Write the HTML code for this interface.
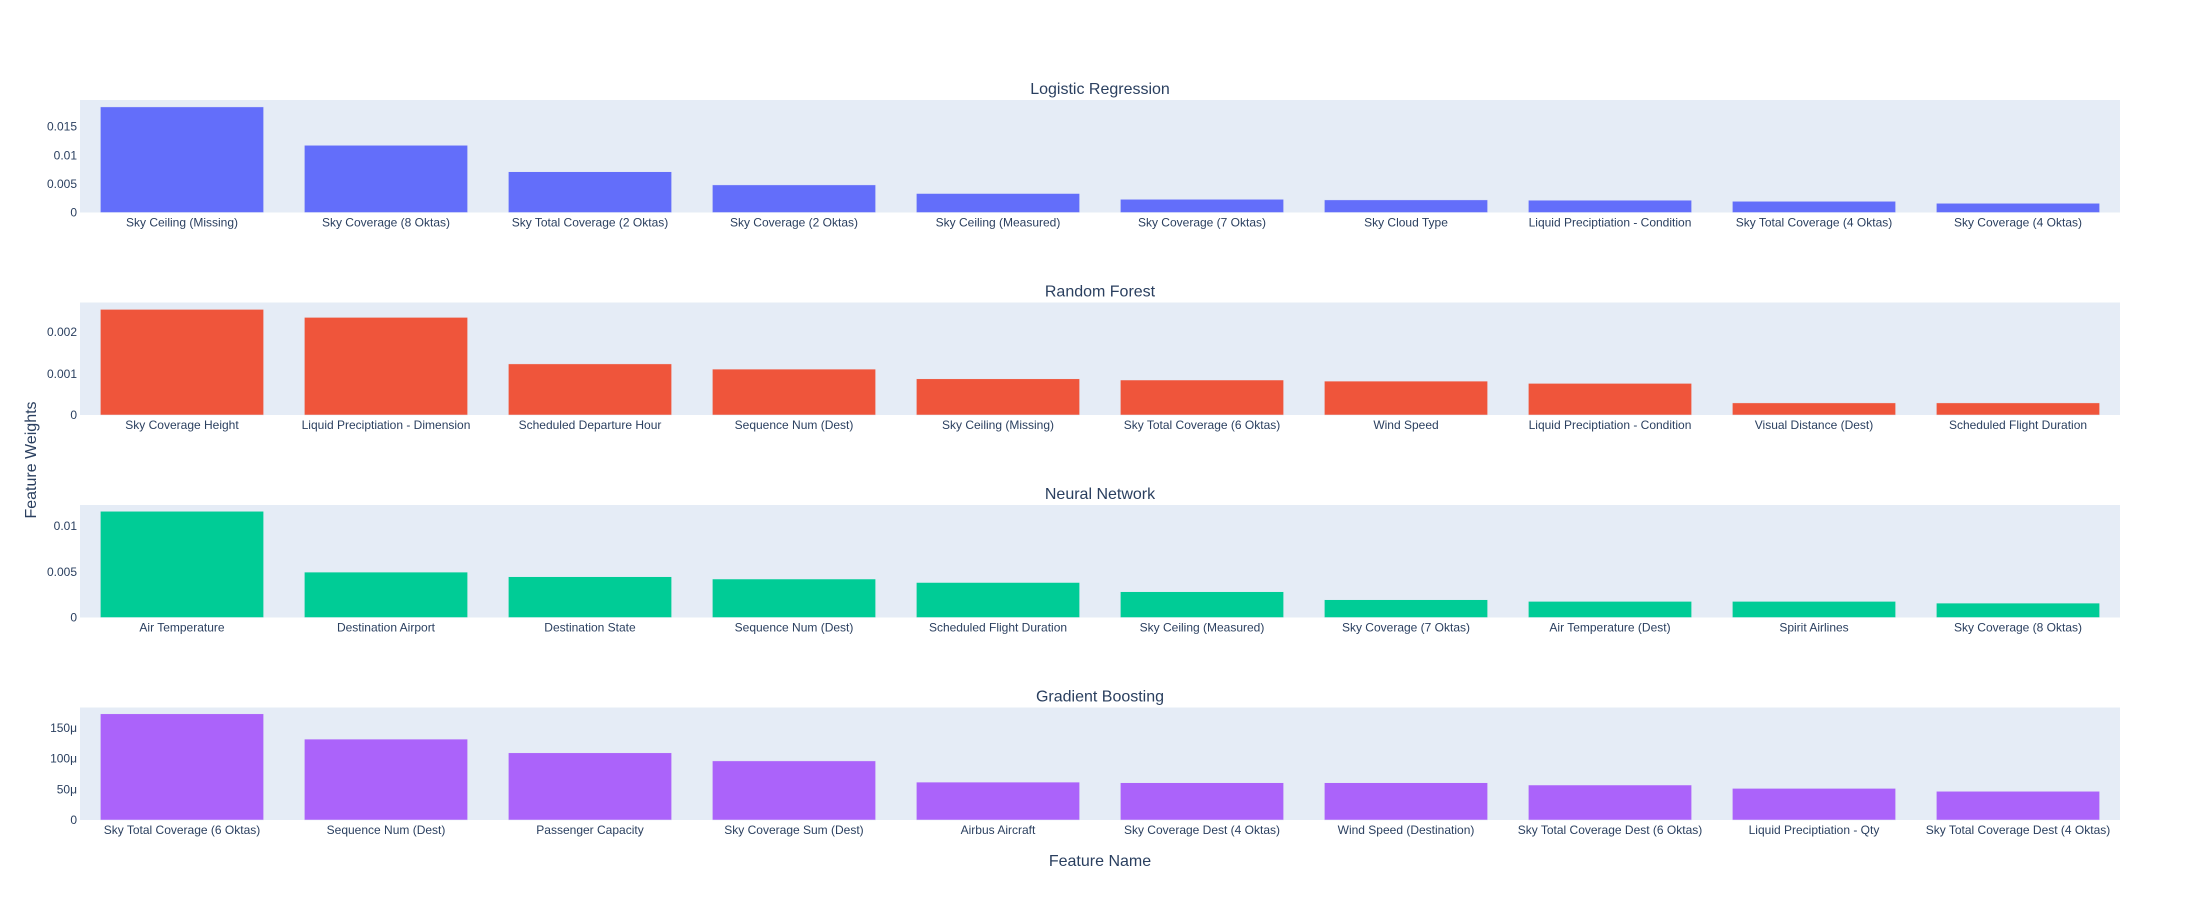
<!DOCTYPE html>
<html><head><meta charset="utf-8"><style>html,body{margin:0;padding:0;background:#fff}svg{display:block}text{font-family:"Liberation Sans",Arial,sans-serif;fill:#2a3f5f}</style></head><body>
<svg width="2200" height="900" viewBox="0 0 2200 900" xmlns="http://www.w3.org/2000/svg">
<g id="lr">
<rect x="80" y="100" width="2040" height="112.5" fill="#E5ECF6"/>
<text x="1100" y="94" font-size="16" text-anchor="middle">Logistic Regression</text>
<g font-size="12" text-anchor="end"><text x="77" y="216.5">0</text><text x="77" y="188">0.005</text><text x="77" y="159.3">0.01</text><text x="77" y="130.6">0.015</text></g>
<g fill="#636efa" stroke="#e5ecf6" stroke-width="0.5">
<rect x="100.4" y="106.9" width="163.2" height="105.6"/><rect x="304.4" y="145.3" width="163.2" height="67.2"/><rect x="508.4" y="171.7" width="163.2" height="40.8"/><rect x="712.4" y="184.9" width="163.2" height="27.6"/><rect x="916.4" y="193.5" width="163.2" height="19"/><rect x="1120.4" y="199.3" width="163.2" height="13.2"/><rect x="1324.4" y="199.9" width="163.2" height="12.6"/><rect x="1528.4" y="200.2" width="163.2" height="12.3"/><rect x="1732.4" y="201.3" width="163.2" height="11.2"/><rect x="1936.4" y="203.3" width="163.2" height="9.2"/></g>
<g font-size="12" text-anchor="middle"><text x="182" y="226.5">Sky Ceiling (Missing)</text><text x="386" y="226.5">Sky Coverage (8 Oktas)</text><text x="590" y="226.5">Sky Total Coverage (2 Oktas)</text><text x="794" y="226.5">Sky Coverage (2 Oktas)</text><text x="998" y="226.5">Sky Ceiling (Measured)</text><text x="1202" y="226.5">Sky Coverage (7 Oktas)</text><text x="1406" y="226.5">Sky Cloud Type</text><text x="1610" y="226.5">Liquid Preciptiation - Condition</text><text x="1814" y="226.5">Sky Total Coverage (4 Oktas)</text><text x="2018" y="226.5">Sky Coverage (4 Oktas)</text></g>
</g>
<g id="rf">
<rect x="80" y="302.5" width="2040" height="112.5" fill="#E5ECF6"/>
<text x="1100" y="296.5" font-size="16" text-anchor="middle">Random Forest</text>
<g font-size="12" text-anchor="end"><text x="77" y="419">0</text><text x="77" y="378">0.001</text><text x="77" y="336">0.002</text></g>
<g fill="#EF553B" stroke="#e5ecf6" stroke-width="0.5">
<rect x="100.4" y="309.4" width="163.2" height="105.6"/><rect x="304.4" y="317.4" width="163.2" height="97.6"/><rect x="508.4" y="363.9" width="163.2" height="51.1"/><rect x="712.4" y="369.1" width="163.2" height="45.9"/><rect x="916.4" y="378.8" width="163.2" height="36.2"/><rect x="1120.4" y="380" width="163.2" height="35"/><rect x="1324.4" y="381.1" width="163.2" height="33.9"/><rect x="1528.4" y="383.4" width="163.2" height="31.6"/><rect x="1732.4" y="402.9" width="163.2" height="12.1"/><rect x="1936.4" y="402.9" width="163.2" height="12.1"/></g>
<g font-size="12" text-anchor="middle"><text x="182" y="429">Sky Coverage Height</text><text x="386" y="429">Liquid Preciptiation - Dimension</text><text x="590" y="429">Scheduled Departure Hour</text><text x="794" y="429">Sequence Num (Dest)</text><text x="998" y="429">Sky Ceiling (Missing)</text><text x="1202" y="429">Sky Total Coverage (6 Oktas)</text><text x="1406" y="429">Wind Speed</text><text x="1610" y="429">Liquid Preciptiation - Condition</text><text x="1814" y="429">Visual Distance (Dest)</text><text x="2018" y="429">Scheduled Flight Duration</text></g>
</g>
<g id="nn">
<rect x="80" y="505" width="2040" height="112.5" fill="#E5ECF6"/>
<text x="1100" y="499" font-size="16" text-anchor="middle">Neural Network</text>
<g font-size="12" text-anchor="end"><text x="77" y="621.5">0</text><text x="77" y="576">0.005</text><text x="77" y="530">0.01</text></g>
<g fill="#00cc96" stroke="#e5ecf6" stroke-width="0.5">
<rect x="100.4" y="511.3" width="163.2" height="106.2"/><rect x="304.4" y="572.1" width="163.2" height="45.4"/><rect x="508.4" y="576.7" width="163.2" height="40.8"/><rect x="712.4" y="579" width="163.2" height="38.5"/><rect x="916.4" y="582.5" width="163.2" height="35"/><rect x="1120.4" y="591.7" width="163.2" height="25.8"/><rect x="1324.4" y="599.7" width="163.2" height="17.8"/><rect x="1528.4" y="601.4" width="163.2" height="16.1"/><rect x="1732.4" y="601.4" width="163.2" height="16.1"/><rect x="1936.4" y="603.1" width="163.2" height="14.4"/></g>
<g font-size="12" text-anchor="middle"><text x="182" y="631.5">Air Temperature</text><text x="386" y="631.5">Destination Airport</text><text x="590" y="631.5">Destination State</text><text x="794" y="631.5">Sequence Num (Dest)</text><text x="998" y="631.5">Scheduled Flight Duration</text><text x="1202" y="631.5">Sky Ceiling (Measured)</text><text x="1406" y="631.5">Sky Coverage (7 Oktas)</text><text x="1610" y="631.5">Air Temperature (Dest)</text><text x="1814" y="631.5">Spirit Airlines</text><text x="2018" y="631.5">Sky Coverage (8 Oktas)</text></g>
</g>
<g id="gb">
<rect x="80" y="707.5" width="2040" height="112.5" fill="#E5ECF6"/>
<text x="1100" y="701.5" font-size="16" text-anchor="middle">Gradient Boosting</text>
<g font-size="12" text-anchor="end"><text x="77" y="824">0</text><text x="77" y="793.6">50μ</text><text x="77" y="762.6">100μ</text><text x="77" y="732.2">150μ</text></g>
<g fill="#ab63fa" stroke="#e5ecf6" stroke-width="0.5">
<rect x="100.4" y="713.8" width="163.2" height="106.2"/><rect x="304.4" y="739.1" width="163.2" height="80.9"/><rect x="508.4" y="752.8" width="163.2" height="67.2"/><rect x="712.4" y="760.9" width="163.2" height="59.1"/><rect x="916.4" y="782.1" width="163.2" height="37.9"/><rect x="1120.4" y="782.7" width="163.2" height="37.3"/><rect x="1324.4" y="782.7" width="163.2" height="37.3"/><rect x="1528.4" y="785" width="163.2" height="35"/><rect x="1732.4" y="788.4" width="163.2" height="31.6"/><rect x="1936.4" y="791.3" width="163.2" height="28.7"/></g>
<g font-size="12" text-anchor="middle"><text x="182" y="834">Sky Total Coverage (6 Oktas)</text><text x="386" y="834">Sequence Num (Dest)</text><text x="590" y="834">Passenger Capacity</text><text x="794" y="834">Sky Coverage Sum (Dest)</text><text x="998" y="834">Airbus Aircraft</text><text x="1202" y="834">Sky Coverage Dest (4 Oktas)</text><text x="1406" y="834">Wind Speed (Destination)</text><text x="1610" y="834">Sky Total Coverage Dest (6 Oktas)</text><text x="1814" y="834">Liquid Preciptiation - Qty</text><text x="2018" y="834">Sky Total Coverage Dest (4 Oktas)</text></g>
</g>
<text x="1100" y="866" font-size="16" text-anchor="middle">Feature Name</text>
<text x="0" y="0" font-size="16" text-anchor="middle" transform="translate(36,460) rotate(-90)">Feature Weights</text>
</svg>
</body></html>
